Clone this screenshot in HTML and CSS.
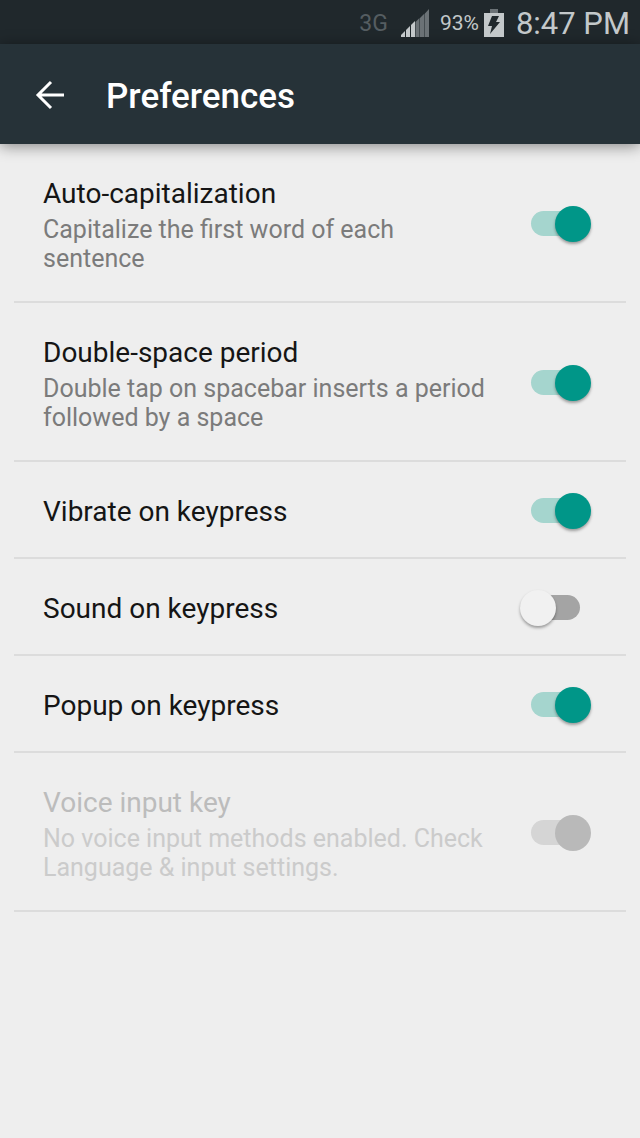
FILE: index.html
```html
<!DOCTYPE html>
<html lang="en">
<head>
  <meta charset="UTF-8" />
  <meta name="viewport" content="width=device-width, initial-scale=1" />
  <title>Preferences</title>
  <link rel="stylesheet" href="styles.css">
</head>
<body>
  <div class="status-bar">
    <span class="network">3G</span>
    <svg class="signal" viewBox="0 0 28 28" aria-hidden="true">
      <path class="signal-on" d="M0 28V26L4 22V28ZM5 28V21L9 17V28ZM10 28V16L14 12V28Z" />
      <path class="signal-off" d="M14.500 28V13L18.500 9V28ZM19 28V9L23 5V28ZM23.500 28V5L28 0V28Z" />
    </svg>
    <span class="percent">93%</span>
    <svg class="battery" viewBox="0 0 20 28" aria-hidden="true">
      <path class="battery-cap" d="M6 0H14V4H6Z" />
      <path class="battery-body" d="M0 4H20V28H0Z" />
      <path class="battery-bolt" d="M8 7H15L12 13H16L6 25L8 17H4Z" />
    </svg>
    <span class="clock">8:47 PM</span>
  </div>

  <header>
    <button type="button" class="back-btn" aria-label="Back">
      <svg viewBox="0 0 30 30" aria-hidden="true">
        <path d="M29 15H3M16 2L3 15L16 28" />
      </svg>
    </button>
    <h1>Preferences</h1>
  </header>

  <main>
    <div class="pref">
      <label class="pref-text" for="autoCap">
        <span class="pref-title">Auto-capitalization</span>
        <span class="pref-summary">Capitalize the first word of each sentence</span>
      </label>
      <input type="checkbox" class="switch" id="autoCap" checked />
    </div>

    <div class="pref">
      <label class="pref-text" for="doubleSpace">
        <span class="pref-title">Double-space period</span>
        <span class="pref-summary">Double tap on spacebar inserts a period followed by a space</span>
      </label>
      <input type="checkbox" class="switch" id="doubleSpace" checked />
    </div>

    <div class="pref">
      <label class="pref-text" for="vibrate">
        <span class="pref-title">Vibrate on keypress</span>
      </label>
      <input type="checkbox" class="switch" id="vibrate" checked />
    </div>

    <div class="pref">
      <label class="pref-text" for="sound">
        <span class="pref-title">Sound on keypress</span>
      </label>
      <input type="checkbox" class="switch" id="sound" />
    </div>

    <div class="pref">
      <label class="pref-text" for="popup">
        <span class="pref-title">Popup on keypress</span>
      </label>
      <input type="checkbox" class="switch" id="popup" checked />
    </div>

    <div class="pref disabled">
      <label class="pref-text" for="voice">
        <span class="pref-title">Voice input key</span>
        <span class="pref-summary">No voice input methods enabled. Check Language &amp; input settings.</span>
      </label>
      <input type="checkbox" class="switch" id="voice" checked disabled />
    </div>
  </main>
</body>
</html>
```

FILE: styles.css
```css
body {
  margin: 0;
  font-family: Roboto, sans-serif;
  background-color: #eeeeee;
  color: #151515;
  min-height: 100vh;
}

.status-bar {
  display: flex;
  align-items: center;
  justify-content: flex-end;
  box-sizing: border-box;
  height: 44px;
  padding: 2px 10px 0;
  background-color: #20282c;
  color: #c3c8ca;
}

.network {
  font-size: 23px;
  color: #555d61;
}

.signal {
  width: 28px;
  height: 28px;
  margin: 0 11px 0 13px;
}

.signal-on {
  fill: #c3c8ca;
}

.signal-off {
  fill: #6b7276;
}

.percent {
  font-size: 21px;
}

.battery {
  width: 20px;
  height: 28px;
  margin: 0 12px 0 5px;
}

.battery-cap {
  fill: #6b7276;
}

.battery-body {
  fill: #c3c8ca;
}

.battery-bolt {
  fill: #20282c;
}

.clock {
  font-size: 31px;
}

header {
  display: flex;
  align-items: center;
  gap: 36px;
  box-sizing: border-box;
  height: 100px;
  padding: 2px 30px 0;
  background-color: #263238;
  color: white;
  box-shadow: 0 2px 14px rgba(0,0,0,0.45);
}

.back-btn {
  display: flex;
  padding: 5px;
  border: none;
  background: none;
  cursor: pointer;
}

.back-btn svg {
  width: 30px;
  height: 30px;
  fill: none;
  stroke: white;
  stroke-width: 3;
}

h1 {
  margin: 0;
  padding-top: 2px;
  font-size: 35px;
  font-weight: 500;
}

.pref {
  display: flex;
  align-items: center;
  gap: 30px;
  margin: 0 14px;
  padding: 32px 35px 28px 29px;
  border-bottom: 2px solid #dcdcdc;
}

.pref-text {
  flex: 1;
}

.pref-title {
  display: block;
  font-size: 28px;
  line-height: 35px;
}

.pref-summary {
  display: block;
  margin-top: 4px;
  font-size: 25px;
  line-height: 29px;
  color: #7b7b7b;
}

.disabled .pref-title {
  color: #bcbcbc;
}

.disabled .pref-summary {
  color: #cbcbcb;
}

.switch {
  appearance: none;
  display: flex;
  align-items: center;
  flex-shrink: 0;
  width: 71px;
  height: 36px;
  margin: -2px 0 0;
  cursor: pointer;
}

/* track */
.switch::before {
  content: "";
  width: 49px;
  height: 25px;
  margin-left: 11px;
  border-radius: 13px;
  background-color: #a4a4a4;
}

/* thumb */
.switch::after {
  content: "";
  width: 36px;
  height: 36px;
  margin-left: -60px;
  border-radius: 50%;
  background-color: #f1f1f1;
  box-shadow: 0 2px 3px rgba(0,0,0,0.35);
}

.switch:checked::before {
  background-color: #a5d5ce;
}

.switch:checked::after {
  margin-left: -25px;
  background-color: #009688;
}

.switch:disabled::before {
  background-color: #d5d5d5;
}

.switch:disabled::after {
  background-color: #b9b9b9;
  box-shadow: none;
}
```
